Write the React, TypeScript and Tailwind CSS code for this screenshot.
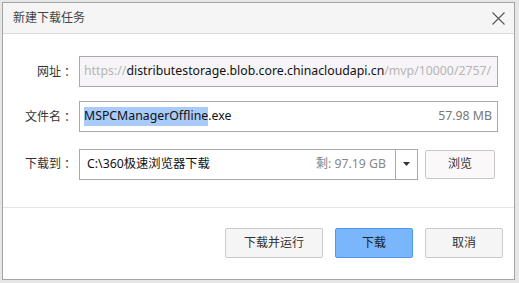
import React from "react";

const F = { fontFamily: '"Noto Sans", "Noto Sans CJK SC", sans-serif' };
const C = { fontFamily: '"Noto Sans CJK TC", sans-serif' };

function Label({ text }: { text: string }) {
  return (
    <div className="w-[58px] shrink-0 flex justify-end text-[12px] text-[#333]">
      <span>{text}</span>
      <span style={C}>：</span>
    </div>
  );
}

export default function App() {
  return (
    <div
      className="w-[519px] h-[283px] bg-[#e6e6e6] pl-[2px] pt-[2px] pr-[4px] pb-[3px] text-[#333]"
      style={F}
    >
      <div className="w-full h-full border border-[#a5a5a5] bg-white flex flex-col">
        {/* header */}
        <div className="h-[31px] bg-[#f5f5f5] border-b border-[#dcdcdc] flex items-center justify-between pl-[10px] pr-[9px] shrink-0">
          <span className="text-[12px] text-[#444]">新建下载任务</span>
          <svg width="13" height="13" viewBox="0 0 13 13" className="mt-[1px]">
            <path d="M0.5 0.5 L12.5 12.5 M12.5 0.5 L0.5 12.5" stroke="#555" strokeWidth="1.1" fill="none" />
          </svg>
        </div>
        {/* body */}
        <div className="flex-1 flex flex-col pt-[22px] pl-[12px] pr-[16px] border-b border-[#e5e5e5]">
          <div className="flex items-center h-[31px]">
            <Label text="网址" />
            <div className="ml-[6px] flex-1 h-[31px] border border-[#a9a9a9] bg-[#f6f4f6] flex items-center pl-[4px] overflow-hidden whitespace-nowrap text-[12.3px]">
              <span className="text-[#b5b5b5]">https://</span>
              <span className="text-[#111]">distributestorage.blob.core.chinacloudapi.cn</span>
              <span className="text-[#b5b5b5]">/mvp/10000/2757/</span>
            </div>
          </div>
          <div className="flex items-center h-[31px] mt-[14px]">
            <Label text="文件名" />
            <div className="ml-[6px] flex-1 h-[31px] border border-[#a9a9a9] bg-white flex items-center pl-[4px] pr-[5px] whitespace-nowrap text-[12.3px]">
              <span className="bg-[#a8cbfa] text-[#111]">MSPCManagerOffline</span>
              <span className="text-[#111]">.exe</span>
              <span className="ml-auto text-[#777]">57.98 MB</span>
            </div>
          </div>
          <div className="flex items-center h-[30px] mt-[17px]">
            <Label text="下载到" />
            <div className="ml-[6px] w-[339px] h-[31px] border border-[#a9a9a9] bg-white flex items-center whitespace-nowrap">
              <span className="pl-[7px] text-[12.3px] text-[#111]">C:\360极速浏览器下载</span>
              <span className="ml-auto pr-[9px] text-[12.3px] text-[#888]">剩: 97.19 GB</span>
              <div className="w-[22px] h-full border-l border-[#a9a9a9] flex items-center justify-center">
                <svg width="7" height="4" viewBox="0 0 7 4">
                  <path d="M0 0 L7 0 L3.5 4 Z" fill="#333" />
                </svg>
              </div>
            </div>
            <button className="ml-[7px] w-[70px] h-[29px] border border-[#c8c8c8] rounded-[2px] bg-[#fbf8fa] text-[12px] text-[#333]">
              浏览
            </button>
          </div>
        </div>
        {/* footer */}
        <div className="h-[71px] shrink-0 flex items-center justify-end pr-[11px] gap-[12px] pb-[2px]">
          <button className="w-[98px] h-[30px] border border-[#cacaca] rounded-[2px] bg-[#f5f5f5] text-[12px] text-[#333]">
            下载并运行
          </button>
          <button className="w-[78px] h-[30px] border border-[#4f97ea] rounded-[2px] bg-[#7ab6fc] text-[12px] text-[#222]">
            下载
          </button>
          <button className="w-[78px] h-[30px] border border-[#cacaca] rounded-[2px] bg-[#f5f5f5] text-[12px] text-[#333]">
            取消
          </button>
        </div>
      </div>
    </div>
  );
}
